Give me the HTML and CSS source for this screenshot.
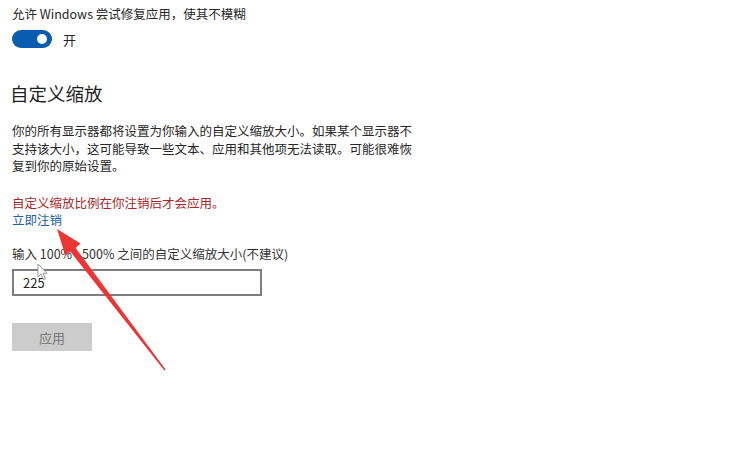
FILE: index.html
```html
<!DOCTYPE html>
<html lang="zh-CN">
<head>
    <meta charset="UTF-8">
    <title>自定义缩放</title>
    <link rel="stylesheet" href="styles.css">
</head>
<body>
    <div class="page">
        <!-- Fix blurry apps -->
        <p class="line">允许 Windows 尝试修复应用，使其不模糊</p>
        <div class="toggle-row">
            <span class="toggle"><span class="knob"></span></span>
            <span class="toggle-label">开</span>
        </div>

        <!-- Custom scaling -->
        <h2 class="heading">自定义缩放</h2>
        <p class="desc">你的所有显示器都将设置为你输入的自定义缩放大小。如果某个显示器不<br>支持该大小，这可能导致一些文本、应用和其他项无法读取。可能很难恢<br>复到你的原始设置。</p>

        <p class="warn">自定义缩放比例在你注销后才会应用。</p>
        <a class="link" href="#">立即注销</a>

        <p class="label">输入 100% - 500% 之间的自定义缩放大小(不建议)</p>
        <div class="input">225</div>

        <button class="apply" disabled>应用</button>
    </div>

    <!-- mouse cursor -->
    <svg class="cursor" width="12" height="18" viewBox="0 0 12 18">
        <path d="M1 1 L1 14 L4 11 L6.5 16.5 L8.5 15.6 L6 10.3 L10 10.3 Z" fill="#fff" stroke="#9a9a9a" stroke-width="1"/>
    </svg>

    <!-- red annotation arrow -->
    <svg class="arrow" width="753" height="456" viewBox="0 0 753 456">
        <polygon points="57,229 80.5,243.5 75.6,247.9 165.6,369.6 164.4,370.4 70.3,251.6 65.4,255.4" fill="#ec3535"/>
    </svg>
</body>
</html>
```

FILE: styles.css
```css
/* General */
body {
    margin: 0;
    background: #fff;
    font-family: "Noto Sans CJK SC", "Noto Sans", sans-serif;
    color: #262626;
    position: relative;
    height: 456px;
    overflow: hidden;
}

.page {
    padding: 5px 12px 0 12px;
    font-size: 12.5px;
}

p {
    margin: 0;
}

.line {
    line-height: 18px;
}

/* Toggle */
.toggle-row {
    display: flex;
    align-items: center;
    gap: 11px;
    margin-top: 7px;
    height: 18px;
}

.toggle {
    width: 40px;
    height: 18px;
    border-radius: 9px;
    background: #0a5cb0;
    display: flex;
    align-items: center;
    justify-content: flex-end;
    padding-right: 5px;
    box-sizing: border-box;
}

.toggle .knob {
    width: 10px;
    height: 10px;
    border-radius: 50%;
    background: #fff;
}

.toggle-label {
    font-size: 13px;
}

/* Heading */
.heading {
    font-size: 18.5px;
    font-weight: normal;
    line-height: 26px;
    margin: 32px 0 0 -2px;
    color: #1f1f1f;
}

.desc {
    margin-top: 16px;
    line-height: 17.7px;
}

.warn {
    margin-top: 19px;
    line-height: 17px;
    color: #a8262a;
}

.link {
    display: block;
    margin-top: 1px;
    line-height: 16px;
    color: #1f62a8;
    text-decoration: none;
}

.label {
    margin-top: 17px;
    line-height: 18px;
    color: #333;
}

.input {
    margin-top: 6px;
    width: 250px;
    height: 27px;
    box-sizing: border-box;
    border: 2px solid #7d7d7d;
    padding-left: 9px;
    line-height: 23px;
    font-size: 13px;
}

.apply {
    display: block;
    margin-top: 27px;
    width: 80px;
    height: 28px;
    border: none;
    background: #cccccc;
    color: #7a7a7a;
    font-family: inherit;
    font-size: 13px;
    padding: 0;
}

/* Overlays */
.cursor {
    position: absolute;
    left: 37px;
    top: 263px;
}

.arrow {
    position: absolute;
    left: 0;
    top: 0;
    pointer-events: none;
}
```
